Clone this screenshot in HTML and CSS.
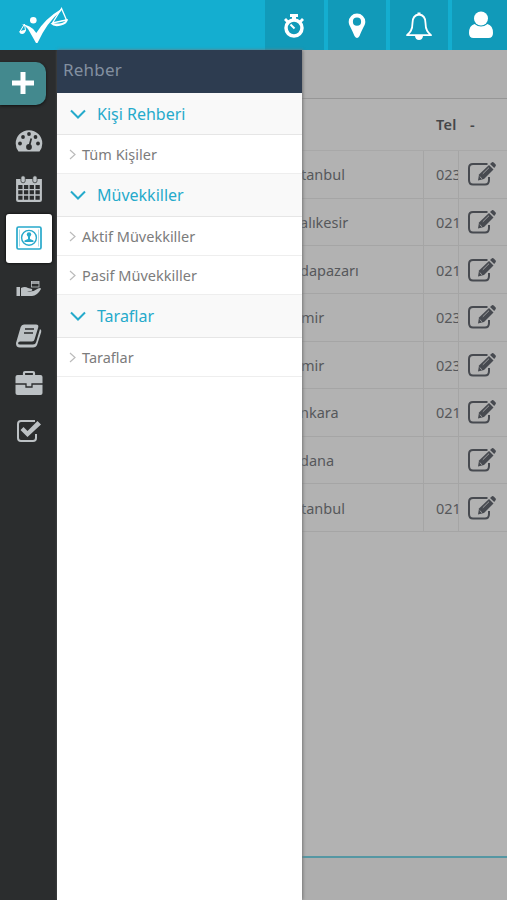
FILE: index.html
```html
<!DOCTYPE html>
<html lang="tr">
<head>
<meta charset="utf-8">
<title>Rehber</title>
<link rel="stylesheet" href="styles.css">
</head>
<body>
<svg class="defs" width="0" height="0">
  <symbol id="edit" viewBox="0 0 30 26">
    <path d="M20.500 3H6Q2 3 2 7V19Q2 23.500 6 23.500H18Q22 23.500 22 19V16" fill="none" stroke="currentColor" stroke-width="2"/>
    <path d="M11 19.500L12 13.500L22 4L26.500 8.500L17 18Z" fill="currentColor"/>
    <path d="M23 3L25 1.200Q26 .8 27 1.700L28.700 3.500Q29.300 4.500 28.400 5.500L27.200 7Z" fill="currentColor"/>
    <path d="M12.700 15.500L15 17.800M15.800 12.800L22 6.700" stroke="#b2b2b2" stroke-width=".8"/>
  </symbol>
  <symbol id="down" viewBox="0 0 16 10"><path d="M1 1.500L8 8.500L15 1.500" fill="none" stroke="currentColor" stroke-width="2"/></symbol>
  <symbol id="right" viewBox="0 0 7 11"><path d="M1 1L6 5.500L1 10" fill="none" stroke="currentColor" stroke-width="1.200"/></symbol>
</svg>
<header class="topbar">
  <div class="brand">
    <svg width="54" height="42" viewBox="0 0 54 42" fill="#fff">
      <circle cx="17.300" cy="16.300" r="3.300"/>
      <path d="M5.500 20Q10 20.500 13.500 22.500Q17 24 20.300 29Q29 14.500 46 4.500L45 7Q31 18 21.500 39H20Q15 30 12 25Q9.500 21.500 5.500 20Z"/>
      <path d="M45.500 4.500L36.500 19L50.500 16Z" fill="none" stroke="#fff" stroke-width="1.300"/>
      <path d="M34.500 19.500L52 15Q51.500 20 45 21.500Q38 23.500 34.500 19.500Z"/>
      <path d="M37.500 19.500L49.500 17Q47 20 37.500 19.500Z" fill="#14aed0"/>
      <path d="M8.500 20L4 27.500L9.500 26.500Z" fill="none" stroke="#fff"/>
      <path d="M3 27.500L10 26Q9 30 6 30Q4 30 3 27.500Z"/>
    </svg>
  </div>
  <nav class="tools">
    <span class="tool timer"><svg width="22" height="26" viewBox="0 0 22 26"><circle cx="11" cy="15" r="8" fill="none" stroke="#fff" stroke-width="3.500"/><path d="M7 1H15V4H13V7H9V4H7ZM1 7L3 5L6 8L4 10ZM16 8L19 5L21 7L18 10Z" fill="#fff"/><path d="M7.500 11.500L11.500 15.500" stroke="#fff" stroke-width="2"/></svg></span>
    <span class="tool pin"><svg width="18" height="26" viewBox="0 0 18 26"><path fill="#fff" fill-rule="evenodd" d="M9 .5A8.300 8.300 0 0 0 .7 8.800C.7 12 3 14.500 6.500 23Q9 27 11.500 23C15 14.500 17.300 12 17.300 8.800A8.300 8.300 0 0 0 9 .5ZM9 4.600A4.100 4.100 0 1 1 9 12.800A4.100 4.100 0 1 1 9 4.600Z"/></svg></span>
    <span class="tool bell"><svg width="28" height="30" viewBox="0 0 28 30"><path d="M14 3.500C8.500 4 7.500 7.500 7.500 12C7.500 19 5 21.500 2 24.200H26C23 21.500 20.500 19 20.500 12C20.500 7.500 19.500 4 14 3.500Z" fill="none" stroke="#fff" stroke-width="1.800" stroke-linejoin="round"/><path d="M12.500 1.500H15.500V4H12.500ZM10 25H18Q17.500 29 14 29Q10.500 29 10 25Z" fill="#fff"/></svg></span>
    <span class="tool user"><svg width="26" height="28" viewBox="0 0 26 28" fill="#fff"><circle cx="13" cy="7.500" r="7"/><path d="M6.500 13Q13 18 19.500 13Q25 14.500 25 22Q25 27 20.500 27H5.500Q1 27 1 22Q1 14.500 6.500 13Z"/></svg></span>
  </nav>
</header>
<div class="app">
  <aside class="rail">
    <div class="add"><svg width="22" height="22" viewBox="0 0 22 22"><path d="M8.500 0H13.500V8.500H22V13.500H13.500V22H8.500V13.500H0V8.500H8.500Z" fill="#fff"/></svg></div>
    <div class="item gauge"><svg width="28" height="24" viewBox="0 0 28 24"><path d="M3.500 22.500Q.7 19 .7 14.500A13.300 13.300 0 0 1 27.300 14.500Q27.300 19 24.500 22.500Z" fill="#bcc1c4"/><g fill="#2b2d2e"><circle cx="5" cy="14.500" r="1.900"/><circle cx="8" cy="8" r="1.900"/><circle cx="14" cy="5" r="1.900"/><circle cx="20.500" cy="8" r="1.900"/><circle cx="23" cy="14.500" r="1.900"/><circle cx="14" cy="18" r="2.900"/></g><path d="M14 18L16.300 9.500" stroke="#2b2d2e" stroke-width="1.700"/></svg></div>
    <div class="item calendar"><svg width="28" height="28" viewBox="0 0 26 28" preserveAspectRatio="none"><path d="M1 4H25V25Q25 27 23 27H3Q1 27 1 25Z" fill="#bcc1c4"/><g fill="#2b2d2e"><path d="M3 10H7V14H3ZM8.300 10H12.300V14H8.300ZM13.600 10H17.600V14H13.600ZM19 10H23V14H19ZM3 15.300H7V19.300H3ZM8.300 15.300H12.300V19.300H8.300ZM13.600 15.300H17.600V19.300H13.600ZM19 15.300H23V19.300H19ZM3 20.800H7V24.800H3ZM8.300 20.800H12.300V24.800H8.300ZM13.600 20.800H17.600V24.800H13.600ZM19 20.800H23V24.800H19Z"/></g><g fill="#bcc1c4" stroke="#2b2d2e" stroke-width=".7"><rect x="5.500" y=".8" width="4" height="7" rx="2"/><rect x="16.500" y=".8" width="4" height="7" rx="2"/></g></svg></div>
    <div class="item active"><svg width="26" height="24" viewBox="0 0 26 24" fill="none" stroke="#27a9cb"><rect x="1" y="1" width="24" height="22" rx="1.500" stroke-width="1.700"/><circle cx="13" cy="11.800" r="7.400" stroke-width="1.400"/><circle cx="13" cy="8.500" r="2.200" fill="#27a9cb" stroke="none"/><path d="M12 9H14V13L17.500 14.500V16H8.500V14.500L12 13Z" fill="#27a9cb" stroke="none"/><path d="M3.500 3.500V20.500M22.500 3.500V20.500" stroke-width=".4"/></svg></div>
    <div class="item hand"><svg width="26" height="18" viewBox="0 0 26 18"><path d="M.5 7H4V16H.5ZM5 8Q9 6 12 8L16 9Q17 11 14 11L11 11.200Q17 12.500 22 8.500Q25 7.500 25 9Q21 16 16 16H5Z" fill="#bcc1c4"/><rect x="15.500" y="1.500" width="7.500" height="5.500" fill="none" stroke="#bcc1c4" stroke-width=".8"/><path d="M15 3H23" stroke="#bcc1c4" stroke-width="1.500"/></svg></div>
    <div class="item book"><svg width="28" height="26" viewBox="0 0 28 26"><path d="M9 1.500H21Q24 1.500 23.200 4.500L19.500 16.500Q19 18.500 17 18.500H5Q3.500 18.500 3 20Q3 21.500 5 21.500H18Q20.500 21.500 21.200 19L25 6Q26.800 7 26.200 9L22.200 21.500Q21.300 24.500 18 24.500H5Q.8 24.500 1 20L5.700 4Q6.500 1.500 9 1.500Z" fill="#bcc1c4"/><path d="M10 6H19M9 10H18" stroke="#2b2d2e" stroke-width="1.400"/></svg></div>
    <div class="item case"><svg width="28" height="26" viewBox="0 0 28 26"><path d="M9 6V3Q9 2 10 2H18Q19 2 19 3V6" fill="none" stroke="#bcc1c4" stroke-width="2.200"/><rect x=".5" y="5" width="27" height="20" rx="2" fill="#bcc1c4"/><path d="M0 14H11V17H17V14H28" fill="none" stroke="#2b2d2e" stroke-width="1.300"/></svg></div>
    <div class="item"><svg width="28" height="26" viewBox="0 0 28 26"><path d="M20 3H6Q3 3 3 6V20Q3 23 6 23H18Q21 23 21 20V16" fill="none" stroke="#bcc1c4" stroke-width="2"/><path d="M5.500 12L8.500 9L12.500 13L22.500 3L26 6.500L12.500 19Z" fill="#bcc1c4"/></svg></div>
  </aside>
  <section class="menu">
    <h1>Rehber</h1>
    <div class="group first"><svg><use href="#down"/></svg>Kişi Rehberi</div>
    <div class="link"><svg><use href="#right"/></svg>Tüm Kişiler</div>
    <div class="group"><svg><use href="#down"/></svg>Müvekkiller</div>
    <div class="link"><svg><use href="#right"/></svg>Aktif Müvekkiller</div>
    <div class="link"><svg><use href="#right"/></svg>Pasif Müvekkiller</div>
    <div class="group"><svg><use href="#down"/></svg>Taraflar</div>
    <div class="link"><svg><use href="#right"/></svg>Taraflar</div>
  </section>
  <main class="content">
    <div class="toolbar"></div>
    <div class="thead"><span></span><b>Tel</b><b class="dash">-</b></div>
    <div class="rows">
      <div class="row"><span class="city">tanbul</span><span class="tel">023</span><span class="act"><svg><use href="#edit"/></svg></span></div>
      <div class="row"><span class="city cut">alıkesir</span><span class="tel">021</span><span class="act"><svg><use href="#edit"/></svg></span></div>
      <div class="row"><span class="city cut">dapazarı</span><span class="tel">021</span><span class="act"><svg><use href="#edit"/></svg></span></div>
      <div class="row"><span class="city">mir</span><span class="tel">023</span><span class="act"><svg><use href="#edit"/></svg></span></div>
      <div class="row"><span class="city">mir</span><span class="tel">023</span><span class="act"><svg><use href="#edit"/></svg></span></div>
      <div class="row"><span class="city cut">nkara</span><span class="tel">021</span><span class="act"><svg><use href="#edit"/></svg></span></div>
      <div class="row"><span class="city cut">dana</span><span class="tel"></span><span class="act"><svg><use href="#edit"/></svg></span></div>
      <div class="row"><span class="city">tanbul</span><span class="tel">021</span><span class="act"><svg><use href="#edit"/></svg></span></div>
    </div>
    <footer class="foot"></footer>
  </main>
</div>
</body>
</html>
```
FILE: styles.css
```css
* { box-sizing: border-box; }
body { margin: 0; height: 900px; overflow: hidden; display: flex; flex-direction: column; font-family: "Noto Sans", sans-serif; background: #b2b2b2; }
svg { display: block; flex: none; }
.defs { position: absolute; }
.topbar { height: 50px; flex: none; display: flex; justify-content: space-between; background: #14aed0; }
.brand { padding: 4px 0 0 16px; }
.tools { display: flex; gap: 4px; width: 242px; }
.tool { width: 58px; display: flex; align-items: center; justify-content: center; padding-top: 2px; background: #119ab9; }
.tool.timer { width: 59px; padding: 1px 2px 0 0; }
.tool.pin { padding-right: 1px; }
.tool.bell { padding-right: 1px; }
.tool.user { flex: 1; padding: 0 0 1px 3px; }
.app { flex: 1; display: flex; min-height: 0; }
.rail { width: 57px; flex: none; background: #2b2d2e; padding-top: 12px; }
.add { width: 46px; height: 43px; padding: 10px 0 0 12px; border-radius: 0 10px 10px 0; background: #43898e; box-shadow: 0 1px 3px #111; }
.item { height: 49px; width: 46px; margin-left: 6px; display: flex; align-items: center; justify-content: center; }
.item.gauge { margin-top: 12px; height: 48px; }
.item.calendar { height: 49px; padding-bottom: 2px; }
.item.active { background: #fff; border-radius: 3px; box-shadow: 0 0 3px #000; padding-bottom: 2px; }
.item.hand { height: 48px; margin-top: 2px; }
.item.book { height: 46px; }
.item.case { height: 47px; }
.menu { width: 245px; flex: none; background: #fff; position: relative; box-shadow: 1px 0 3px #777; }
h1 { margin: 0; height: 43px; padding: 0 6px; background: #2d3c50; color: #8390a0; font-size: 17px; font-weight: 400; line-height: 40px; letter-spacing: .2px; }
.group { height: 43px; display: flex; align-items: center; gap: 11px; padding-left: 13px; background: #f9f9f9; border-bottom: 1px solid #e6e6e6; color: #25aacb; font-size: 16px; }
.group.first { height: 42px; }
.link { height: 39px; display: flex; align-items: center; gap: 6px; padding-left: 12px; border-bottom: 1px solid #eee; color: #7c7c7c; font-size: 14.5px; }
.group svg { width: 16px; height: 10px; }
.link svg { width: 7px; height: 11px; color: #bbb; }
.content { flex: 1; min-width: 0; display: flex; flex-direction: column; background: #b2b2b2; color: #56585b; overflow: hidden; }
.toolbar { height: 49px; flex: none; background: #afafaf; border-bottom: 1px solid #969696; }
.thead { height: 52px; flex: none; display: grid; grid-template-columns: 134px 32px 39px; align-items: center; padding-bottom: 1px; font-size: 14.5px; color: #444649; border-bottom: 1px solid #a8a8a8; }
.thead b { font-weight: 600; letter-spacing: .3px; }
.dash { padding-left: 2px; }
.rows { height: 381px; flex: none; display: grid; grid-template-rows: repeat(8, 1fr); }
.row { display: grid; grid-template-columns: 122px 35px 48px; border-bottom: 1px solid #a5a5a5; font-size: 14.5px; }
.row span { display: flex; align-items: center; overflow: hidden; border-right: 1px solid #a5a5a5; }
.row .city { text-indent: -1px; }
.row .city.cut { text-indent: -2px; }
.row .tel { padding-left: 12px; }
.row .act { padding-left: 8px; border-right: 0; color: #474a50; }
.act svg { width: 30px; height: 26px; }
.foot { margin-top: auto; height: 44px; border-top: 2px solid #5597a3; background: #aeaeae; }
```
